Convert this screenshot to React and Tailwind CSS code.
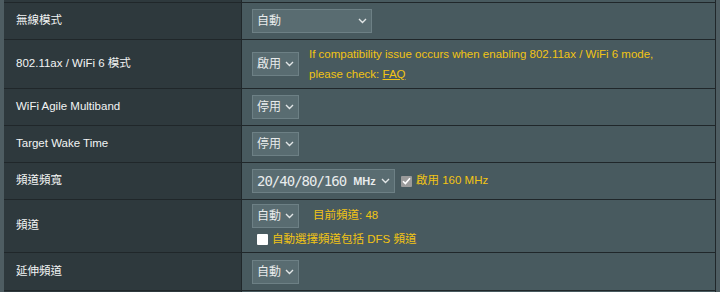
import React from 'react';

const font = "font-['Liberation_Sans','Noto_Sans_CJK_TC',sans-serif]";

const Chevron = () => (
  <svg width="9" height="6" viewBox="0 0 9 6" fill="none" className="shrink-0">
    <path d="M1 1l3.5 3.5L8 1" stroke="#e2e6e7" strokeWidth="1.4" />
  </svg>
);

const Select = ({ children, className = '' }) => (
  <div
    className={`shrink-0 whitespace-nowrap flex items-center justify-between h-[24px] pl-[4px] pr-[4px] bg-[#596c71] border border-[#6d8085] text-[12px] text-[#e8ebec] ${className}`}
  >
    <span className="flex items-center leading-none">{children}</span>
    <Chevron />
  </div>
);

const Row = ({ label, height, children }) => (
  <div className="flex border-t border-[#20272a]" style={{ height }}>
    <div className="w-[238px] shrink-0 bg-[#2e393d] border-r border-[#20272a] flex items-center pl-[12px] text-[11.5px] text-[#f2f4f4]">
      {label}
    </div>
    <div className="flex-1 bg-[#485a5f] pl-[10px] flex flex-col justify-center">{children}</div>
  </div>
);

export default function App() {
  return (
    <div className={`w-[720px] h-[292px] overflow-hidden bg-[#4e5d62] pl-[4px] pr-[4px] ${font}`}>
      <div className="border-r border-[#20272a]">
        {/* tail of previous row */}
        <div className="flex h-[2px]">
          <div className="w-[238px] bg-[#2e393d] border-r border-[#20272a]" />
          <div className="flex-1 bg-[#485a5f]" />
        </div>

        <Row label="無線模式" height={37}>
          <Select className="w-[120px]">自動</Select>
        </Row>

        <Row label="802.11ax / WiFi 6 模式" height={49}>
          <div className="flex items-center gap-[10px]">
            <Select className="w-[47px]">啟用</Select>
            <div className="text-[11.5px] leading-[20px] text-[#f2c414]">
              If compatibility issue occurs when enabling 802.11ax / WiFi 6 mode,
              <br />
              please check: <span className="underline">FAQ</span>
            </div>
          </div>
        </Row>

        <Row label="WiFi Agile Multiband" height={37}>
          <Select className="w-[47px]">停用</Select>
        </Row>

        <Row label="Target Wake Time" height={37}>
          <Select className="w-[47px]">停用</Select>
        </Row>

        <Row label="頻道頻寬" height={37}>
          <div className="flex items-center gap-[6px]">
            <Select className="w-[143px]">
              <span className="font-['DejaVu_Sans_Mono',monospace] text-[14px] tracking-[-1px]">20/40/80/160</span>
              <span className="ml-[7px] text-[11px] font-bold">MHz</span>
            </Select>
            <div className="flex items-center gap-[4px] text-[11.5px] text-[#f2c414]">
              <span className="w-[11px] h-[11px] bg-[#9b9b9b] flex items-center justify-center rounded-[1px]">
                <svg width="9" height="8" viewBox="0 0 9 8" fill="none">
                  <path d="M1 4.2l2.4 2.4L8 1.2" stroke="#ffffff" strokeWidth="1.6" />
                </svg>
              </span>
              <span>啟用 160 MHz</span>
            </div>
          </div>
        </Row>

        <Row label="頻道" height={53}>
          <div className="flex items-center gap-[14px]">
            <Select className="w-[47px]">自動</Select>
            <span className="text-[11.5px] text-[#f2c414]">目前頻道: 48</span>
          </div>
          <div className="flex items-center gap-[4px] mt-[3px] pl-[5px] text-[11.5px] text-[#f2c414]">
            <span className="w-[11px] h-[11px] bg-white rounded-[1px]" />
            <span>自動選擇頻道包括 DFS 頻道</span>
          </div>
        </Row>

        <Row label="延伸頻道" height={38}>
          <Select className="w-[47px]">自動</Select>
        </Row>

        <div className="border-t border-[#20272a] flex h-[2px]">
          <div className="w-[238px] bg-[#2e393d] border-r border-[#20272a]" />
          <div className="flex-1 bg-[#485a5f]" />
        </div>
      </div>
    </div>
  );
}
